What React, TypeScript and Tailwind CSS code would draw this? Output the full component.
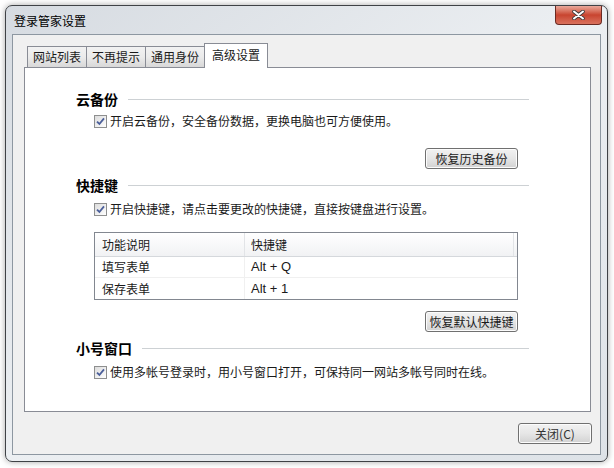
import React from "react";

const font = { fontFamily: '"Noto Sans CJK SC", "Noto Sans", sans-serif' };

const Check = () => (
  <span className="flex h-[13px] w-[13px] items-center justify-center border border-[#8e8f8f] bg-gradient-to-br from-[#dcdcdc] to-white">
    <svg width="9" height="9" viewBox="0 0 9 9">
      <path d="M1 4.6 L3.4 7 L8 1.4" fill="none" stroke="#4b5f9a" strokeWidth="1.8" />
    </svg>
  </span>
);

const CheckRow = ({ text }: { text: string }) => (
  <div className="ml-[18px] flex h-[16px] items-center gap-[3px] text-[12px] leading-[16px] text-[#1a1a1a]">
    <Check />
    <span>{text}</span>
  </div>
);

const Heading = ({ title, className }: { title: string; className?: string }) => (
  <div className={"flex h-[20px] items-center " + (className ?? "")}>
    <span className="text-[14px] font-bold leading-[20px] text-black">{title}</span>
    <span className="ml-[10px] h-px flex-1 bg-[#cdd1d4]" />
  </div>
);

const Btn = ({ label, className }: { label: string; className?: string }) => (
  <button
    className={
      "h-[21px] rounded-[3px] border border-[#707070] bg-gradient-to-b from-[#f2f2f2] via-[#e6e6e6] to-[#d2d2d2] text-[12px] leading-[19px] text-[#1a1a1a] shadow-[inset_0_0_0_1px_#fcfcfc] " +
      (className ?? "")
    }
  >
    {label}
  </button>
);

const tabs = ["网站列表", "不再提示", "通用身份"];

const shortcuts = [
  { name: "填写表单", key: "Alt + Q" },
  { name: "保存表单", key: "Alt + 1" },
];

export default function App() {
  return (
    <div className="h-[468px] w-[614px] bg-white pl-[5px] pt-[5px]" style={font}>
      <div className="flex h-[457px] w-[603px] flex-col rounded-[7px] border border-[#3f4246] bg-gradient-to-br from-[#d6dbe1] via-[#eceff2] to-[#dde2e7] px-[6px] pb-[6px] shadow-[0_0_6px_rgba(0,0,0,0.35)]">
        <div className="flex h-[28px] justify-between">
          <span className="pl-[2px] pt-[7px] text-[12px] leading-[16px] text-black">登录管家设置</span>
          <div className="mr-[-1px] flex h-[19px] w-[47px] items-center justify-center rounded-b-[4px] border border-t-0 border-[#6b2a22] bg-gradient-to-b from-[#e9a99b] via-[#c8442f] to-[#d9715d]">
            <svg width="13" height="10" viewBox="0 0 13 10">
              <path d="M2 1.5 L11 8.5 M11 1.5 L2 8.5" stroke="#3b3b3b" strokeWidth="3.6" strokeLinecap="round" />
              <path d="M2 1.5 L11 8.5 M11 1.5 L2 8.5" stroke="#ffffff" strokeWidth="2" strokeLinecap="round" />
            </svg>
          </div>
        </div>

        <div className="flex flex-1 flex-col border border-[#8d97a1] bg-[#f0f0f0]">
          <div className="flex h-[32px] items-end pl-[14px]">
            {tabs.map((t) => (
              <div
                key={t}
                className="-mr-px flex h-[21px] w-[60px] items-center justify-center border border-b-0 border-[#898c95] bg-gradient-to-b from-[#f2f2f2] via-[#ebebeb] to-[#d8d8d8] text-[12px] text-[#1a1a1a]"
              >
                {t}
              </div>
            ))}
            <div className="relative z-10 -mb-px flex h-[25px] w-[64px] items-start justify-center border border-b-0 border-[#898c95] bg-white pt-[3px] text-[12px] leading-[16px] text-[#1a1a1a]">
              高级设置
            </div>
          </div>

          <div className="ml-[11px] mr-[9px] h-[345px] border border-[#898c95] bg-white pl-[51px] pt-[21px]">
            <div className="w-[453px]">
              <Heading title="云备份" />
              <div className="mt-[4px]">
                <CheckRow text="开启云备份，安全备份数据，更换电脑也可方便使用。" />
              </div>
              <div className="mr-[11px] mt-[19px] flex justify-end">
                <Btn label="恢复历史备份" className="w-[93px]" />
              </div>

              <Heading title="快捷键" className="mt-[6px]" />
              <div className="mt-[6px]">
                <CheckRow text="开启快捷键，请点击要更改的快捷键，直接按键盘进行设置。" />
              </div>

              <div className="ml-[18px] mt-[15px] w-[424px] border border-[#828790] text-[12px] text-[#1a1a1a]">
                <div className="flex h-[24px] border-b border-[#d5d8dc] bg-gradient-to-b from-white to-[#f1f2f4]">
                  <div className="flex w-[150px] items-center border-r border-[#e2e4e7] pl-[7px]">功能说明</div>
                  <div className="flex w-[269px] items-center border-r border-[#e2e4e7] pl-[6px]">快捷键</div>
                </div>
                {shortcuts.map((s, i) => (
                  <div
                    key={s.name}
                    className={"flex h-[21px] " + (i === 0 ? "border-b border-[#f0f0f0]" : "")}
                  >
                    <div className="flex w-[150px] items-center border-r border-[#f0f0f0] pl-[7px]">{s.name}</div>
                    <div className="flex items-center pl-[6px] font-['Liberation_Sans',sans-serif] text-[13px]">
                      {s.key}
                    </div>
                  </div>
                ))}
              </div>

              <div className="mr-[11px] mt-[11px] flex justify-end">
                <Btn label="恢复默认快捷键" className="w-[93px]" />
              </div>

              <Heading title="小号窗口" className="mt-[6px]" />
              <div className="mt-[6px]">
                <CheckRow text="使用多帐号登录时，用小号窗口打开，可保持同一网站多帐号同时在线。" />
              </div>
            </div>
          </div>

          <div className="mr-[8px] mt-[11px] flex justify-end">
            <Btn label="关闭(C)" className="w-[74px] text-[#333]" />
          </div>
        </div>
      </div>
    </div>
  );
}
